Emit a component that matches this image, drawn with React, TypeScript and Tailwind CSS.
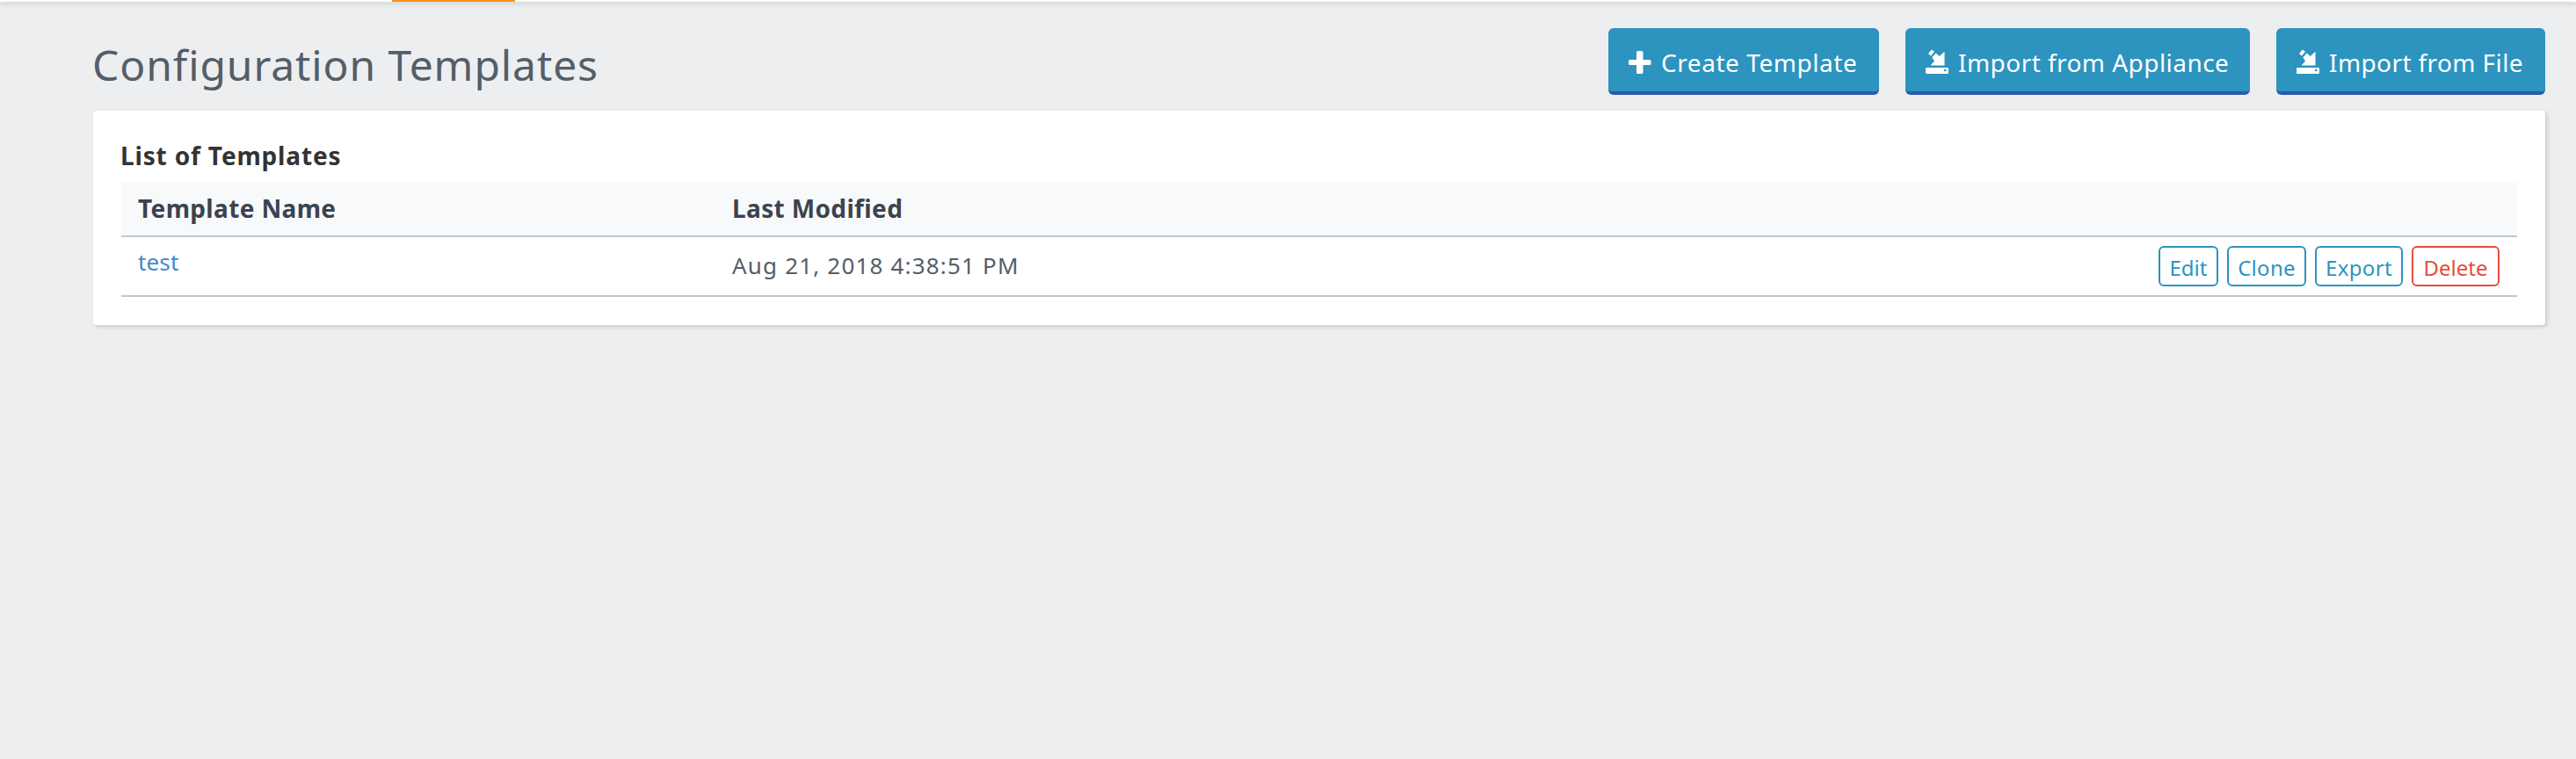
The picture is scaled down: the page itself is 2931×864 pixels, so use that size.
import type { ReactNode } from "react";

function PlusIcon() {
  return (
    <svg className="h-[28px] w-[26px] shrink-0" viewBox="0 0 26 28" fill="white">
      <path d="M10.5 2h4.500q1.500 0 1.500 1.500V12h7.500q1.500 0 1.500 1.500v3q0 1.500-1.500 1.500h-7.500v8.500q0 1.500-1.500 1.500h-4.500q-1.500 0-1.500-1.500V18H1.500Q0 18 0 16.500v-3Q0 12 1.500 12H9V3.500Q9 2 10.500 2z" />
    </svg>
  );
}

function ImportIcon() {
  return (
    <svg className="h-[28px] w-[26px] shrink-0" viewBox="0 0 26 28" fill="white">
      <path d="M3 4.700 7 .4 10 2.800 5.800 7.700z" />
      <path d="M7.300 9.300 11.800 4.400 15.700 8.100 21.500 2.700V18.500H5.500L10 13.600z" />
      <path
        fillRule="evenodd"
        d="M1.300 21h23.400q1.300 0 1.300 1.300v4.400q0 1.300-1.300 1.300H1.300Q0 28 0 26.700v-4.400Q0 21 1.300 21zM21 23v2h2.500v-2z"
      />
    </svg>
  );
}

function ActionButton({ icon, width, text, children }: { icon: ReactNode; width: string; text: string; children: string }) {
  return (
    <button
      className={`flex h-[76px] items-center gap-[11px] rounded-[6px] border-b-4 border-[#2a5caa] bg-[#2c94bf] pl-[23px] text-[28px] leading-[40px] whitespace-nowrap text-white ${width}`}
    >
      <span className="pt-[4px]">{icon}</span>
      <span className={`pt-[6px] ${text}`}>{children}</span>
    </button>
  );
}

function RowButton({ style, children }: { style: string; children: string }) {
  return (
    <button className={`flex h-[46px] items-center justify-center rounded-[6px] border-2 pt-[3px] text-[24px] leading-[30px] ${style}`}>
      {children}
    </button>
  );
}

export default function App() {
  return (
    <div className="h-[864px] w-full overflow-hidden bg-[#edeef0] font-['Noto_Sans',sans-serif]">
      <div className="h-[2px] bg-white pl-[446px] shadow-[0_1px_6px_rgba(0,0,0,0.3)]">
        <div className="h-[2px] w-[140px] bg-[#f89213]" />
      </div>

      <header className="flex h-[124px] items-start justify-between pt-[30px] pr-[35px] pl-[105px]">
        <h1 className="pt-[9px] text-[48px] leading-[66px] tracking-[0.9px] text-[#545e68]">Configuration Templates</h1>
        <div className="flex gap-[30px]">
          <ActionButton icon={<PlusIcon />} width="w-[308px]" text="tracking-[0.55px]">Create Template</ActionButton>
          <ActionButton icon={<ImportIcon />} width="w-[392px]" text="tracking-[0.45px]">Import from Appliance</ActionButton>
          <ActionButton icon={<ImportIcon />} width="w-[306px]" text="tracking-[0.4px]">Import from File</ActionButton>
        </div>
      </header>

      <main className="mr-[35px] ml-[106px] h-[244px] rounded-[4px] bg-white px-[32px] pt-[31px] shadow-[2px_2px_5px_rgba(0,0,0,0.16)]">
        <h2 className="-ml-[1px] h-[51px] text-[28px] leading-[40px] font-bold tracking-[0.84px] text-[#333333]">List of Templates</h2>
        <div className="flex h-[62px] items-center border-b-2 border-[#c1c7cf] bg-[#f8f9fb] pb-[2px] pl-[19px] text-[28px] leading-[40px] font-bold text-[#3a444f]">
          <div className="w-[676px] tracking-[0.36px]">Template Name</div>
          <div className="tracking-[0.36px]">Last Modified</div>
        </div>
        <div className="flex h-[68px] items-center border-b-2 border-[#c1c7cf] pr-[20px] pl-[19px] text-[26px] leading-[36px] text-[#545e68]">
          <a className="w-[676px] pb-[10px] tracking-[0.15px] text-[#428bca]">test</a>
          <div className="grow pb-[3px] tracking-[1.18px]">Aug 21, 2018 4:38:51 PM</div>
          <div className="flex gap-[10px]">
            <RowButton style="w-[68px] border-[#2c94bf] text-[#2c94bf]">Edit</RowButton>
            <RowButton style="w-[90px] border-[#2c94bf] text-[#2c94bf] tracking-[0.3px]">Clone</RowButton>
            <RowButton style="w-[100px] border-[#2c94bf] text-[#2c94bf] tracking-[0.35px]">Export</RowButton>
            <RowButton style="w-[100px] border-[#e74c3c] text-[#e74c3c]">Delete</RowButton>
          </div>
        </div>
      </main>
    </div>
  );
}
